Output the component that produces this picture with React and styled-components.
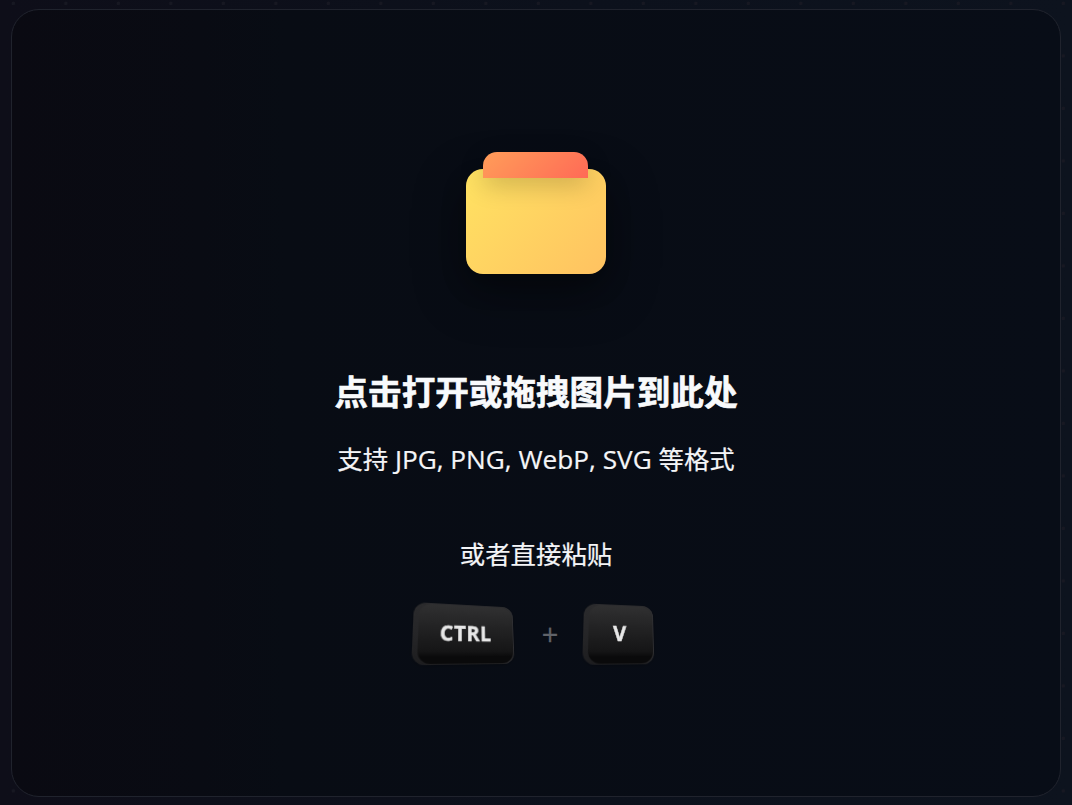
import React from "react";
import styled, { createGlobalStyle } from "styled-components";

const GlobalStyle = createGlobalStyle`
  * { box-sizing: border-box; }
  body { margin: 0; background: #0c111b; }
`;

const Page = styled.main`
  height: 805px;
  padding: 9px 11px 8px;
  overflow: hidden;
  background:
    radial-gradient(circle at 13.3px 3.3px, #171822 1.5px, transparent 2px) 0 0 / 52.5px 52.5px,
    linear-gradient(90deg, #0e0e19 0%, #0c111c 55%, #0d131e 100%);
  font-family: "Open Sans", "Noto Sans CJK SC", sans-serif;
`;

const DropZone = styled.section`
  height: 788px;
  display: flex;
  flex-direction: column;
  align-items: center;
  padding-top: 142px;
  border: 1px solid #20232d;
  border-radius: 28px;
  background: linear-gradient(90deg, #0a0a12 0%, #090b13 18%, #080c14 26%, #080d17 100%);
`;

const Folder = styled.div`
  width: 140px;
  height: 122px;
  padding-top: 17px;
  position: relative;
`;

const FolderBody = styled.div`
  height: 105px;
  border-radius: 17px;
  background: linear-gradient(135deg, #ffe362, #ffc261);
  box-shadow: 0 17px 52px rgba(0, 0, 0, 0.4), 0 12px 26px rgba(0, 0, 0, 0.2);
`;

const FolderTab = styled.div`
  position: absolute;
  top: 0;
  left: 17px;
  width: 105px;
  height: 26px;
  border-radius: 14px 14px 0 0;
  background: linear-gradient(135deg, #ff9d59, #ff6a56);
  box-shadow: 0 7px 26px rgba(0, 0, 0, 0.2);
`;

const Title = styled.h1`
  margin: 93px 0 0;
  font-size: 33.6px;
  line-height: 50px;
  font-weight: 700;
  color: #f8fafc;
  -webkit-text-stroke: 0.6px #f8fafc;
  white-space: nowrap;
`;

const Line = styled.p`
  margin: ${(p) => p.$top}px 0 0;
  font-size: 25.4px;
  line-height: 38px;
  color: #f4f5f7;
  -webkit-text-stroke: 0.2px #f4f5f7;
  white-space: nowrap;
`;

const Latin = styled.span`
  font-size: 26.2px;
  line-height: 1;
`;

const Shortcut = styled.div`
  display: flex;
  align-items: center;
  margin: 31px 3px 0 0;
`;

const Key = styled.kbd`
  width: ${(p) => p.$width}px;
  height: 60px;
  display: flex;
  padding: 1px 1px 1px 5px;
  border-radius: 12px;
  background: linear-gradient(180deg, #2b2b2d, #252527 55%, #1d1d1f);
  box-shadow: inset -1px 0 1px #303033, 0 1px 4px rgba(0, 0, 0, 0.3);
  transform: perspective(150px) rotateX(7deg) rotateY(${(p) => p.$turn}deg);
`;

const KeyFace = styled.span`
  flex: 1;
  display: flex;
  align-items: center;
  justify-content: center;
  padding: 0 3px 2px 0;
  border-radius: 12px;
  background: linear-gradient(180deg, #303031 0%, #242425 35%, #151516 80%, #0a0a0b 89%, #0a0a0b 100%);
  font: 700 20.5px "Open Sans", sans-serif;
  letter-spacing: 0.6px;
  -webkit-text-stroke: 0.4px #e8e8e8;
  color: #e8e8e8;
`;

const Plus = styled.span`
  width: 67px;
  text-align: center;
  font-size: 29px;
  line-height: 34px;
  color: #606369;
  -webkit-text-stroke: 0.3px #606369;
`;

export default function App() {
  return (
    <>
      <GlobalStyle />
      <Page>
        <DropZone>
          <Folder>
            <FolderBody />
            <FolderTab />
          </Folder>
          <Title>点击打开或拖拽图片到此处</Title>
          <Line $top={23}>支持<Latin> JPG, PNG, WebP, SVG </Latin>等格式</Line>
          <Line $top={57}>或者直接粘贴</Line>
          <Shortcut>
            <Key $width={102} $turn={10}><KeyFace>CTRL</KeyFace></Key>
            <Plus>+</Plus>
            <Key $width={71} $turn={8}><KeyFace>V</KeyFace></Key>
          </Shortcut>
        </DropZone>
      </Page>
    </>
  );
}
